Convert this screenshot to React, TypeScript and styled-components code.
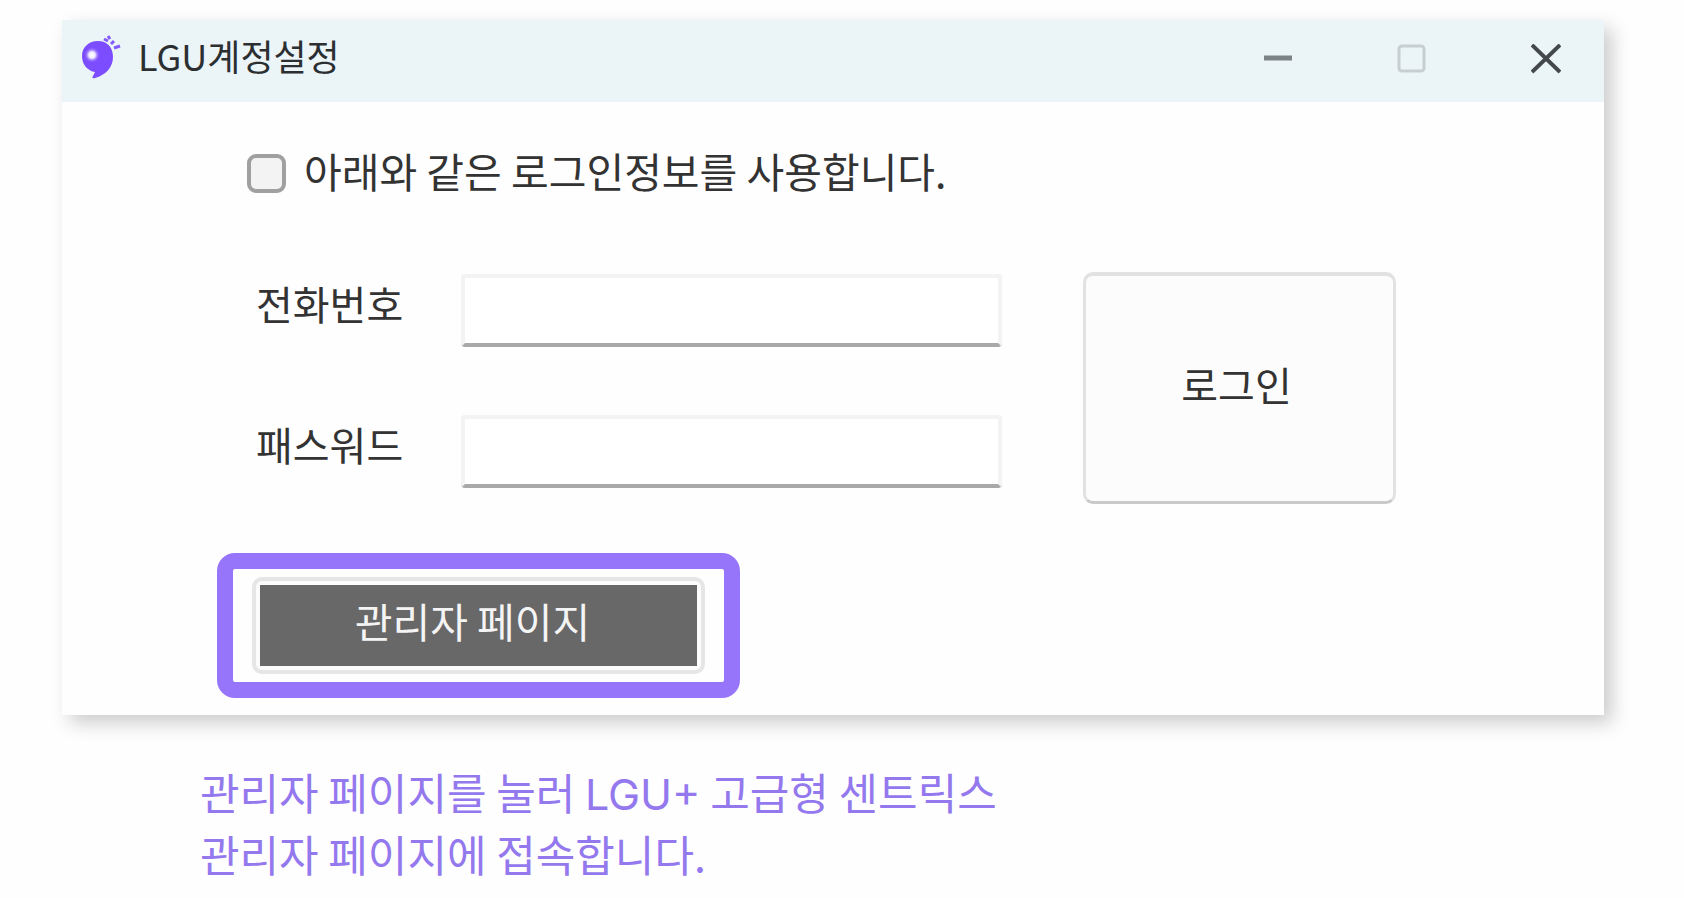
import React from "react";
import styled, { createGlobalStyle } from "styled-components";

const GlobalStyle = createGlobalStyle`
  *, *::before, *::after { box-sizing: border-box; }
  body {
    margin: 0;
    background: #fefefe;
    font-family: "Noto Sans CJK KR", sans-serif;
  }
  button, input { font-family: inherit; }
`;

const Page = styled.main`
  padding: 20px 80px 0 62px;
`;

const Window = styled.section`
  background: #fefefe;
  box-shadow: 8px 8px 18px rgba(0, 0, 0, 0.2);
`;

const TitleBar = styled.header`
  display: flex;
  align-items: center;
  height: 82px;
  padding: 0 28px 4px 18px;
  background: #ebf4f7;
`;

const Logo = styled.svg`
  flex: none;
  width: 44px;
  height: 48px;
`;

const Title = styled.h1`
  flex: 1;
  margin: 0;
  padding: 0 0 8px 14px;
  font-size: 36px;
  line-height: 48px;
  font-weight: 400;
  color: #2b2f32;
`;

const Controls = styled.div`
  display: flex;
  gap: 74px;
`;

const ControlButton = styled.button`
  display: flex;
  align-items: center;
  justify-content: center;
  width: 60px;
  height: 60px;
  padding: 0;
  border: 0;
  background: none;
`;

const Form = styled.form`
  padding: 46px 208px 17px 155px;
`;

const CheckLabel = styled.label`
  display: flex;
  align-items: center;
  gap: 18px;
  height: 48px;
  margin-left: 30px;
  font-size: 41px;
  line-height: 48px;
  color: #333;
`;

const CheckBox = styled.input`
  appearance: none;
  flex: none;
  width: 39px;
  height: 39px;
  margin: 2px 0 0;
  border: 4px solid #a0a0a0;
  border-radius: 9px;
  background: #f3f3f3;
`;

const CheckText = styled.span`
  padding-bottom: 4px;
`;

const LoginArea = styled.div`
  display: flex;
  gap: 81px;
  margin: 76px 0 49px 38px;
`;

const Fields = styled.div`
  display: grid;
  flex: 1;
  align-content: start;
  grid-template-columns: 206px 1fr;
  row-gap: 68px;
  padding-top: 2px;
`;

const FieldLabel = styled.label`
  padding: 5px 0 0 1px;
  font-size: 40px;
  line-height: 48px;
  color: #333;
`;

const Field = styled.input`
  width: 100%;
  min-width: 0;
  height: 73px;
  padding: 0 16px;
  border: 4px solid #f3f3f3;
  border-bottom: 4px solid #a9a9a9;
  border-radius: 4px;
  background: #fff;
  font-size: 40px;
  color: #333;
`;

const LoginButton = styled.button`
  flex: none;
  width: 313px;
  height: 232px;
  padding: 0 6px 10px 0;
  border: 3px solid #e2e2e2;
  border-top-width: 4px;
  border-bottom-color: #c9c9c9;
  border-radius: 10px;
  background: #fcfcfc;
  font-size: 40px;
  color: #333;
`;

const Highlight = styled.div`
  width: 523px;
  max-width: 100%;
  padding: 8px 19px;
  border: 16px solid #9775fa;
  border-radius: 18px;
`;

const AdminButton = styled.button`
  display: block;
  width: 100%;
  height: 97px;
  padding: 4px;
  border: 4px solid #e6e6e6;
  border-radius: 10px;
  background: #fcfcfc;
`;

const AdminText = styled.span`
  display: flex;
  align-items: center;
  justify-content: center;
  height: 100%;
  padding: 0 12px 12px 0;
  background: #686868;
  font-size: 41px;
  line-height: 48px;
  color: #f4f4f4;
`;

const Caption = styled.p`
  margin: 0;
  padding: 45px 0 0 138px;
  font-size: 43px;
  line-height: 62px;
  color: #9478ee;
`;

const Brand = styled.span`
  font-family: Inter, sans-serif;
  line-height: 1;
`;

export default function App() {
  return (
    <>
      <GlobalStyle />
      <Page>
        <Window>
          <TitleBar>
            <Logo viewBox="0 0 44 48" aria-hidden="true">
              <defs>
                <radialGradient id="shine">
                  <stop offset="0" stopColor="#fff" />
                  <stop offset="0.4" stopColor="#f0eaff" />
                  <stop offset="1" stopColor="#7c4dff" stopOpacity="0" />
                </radialGradient>
              </defs>
              <path
                d="M18 6C27 6 33 12 33 22C33 32 26 40 15 43C12 44 12 42 13 41L15 37C8 36 2 30 2 21C2 12 9 6 18 6Z"
                fill="#7c4dff"
              />
              <circle cx="12" cy="20" r="8" fill="url(#shine)" />
              <g stroke="#8459ff" strokeWidth="3">
                <path d="M24 4L28 6M28 1L30 4M31 9L34 6M34 13L40 11" />
              </g>
            </Logo>
            <Title>LGU계정설정</Title>
            <Controls>
              <ControlButton type="button" aria-label="최소화">
                <svg width="30" height="30" viewBox="0 0 30 30">
                  <path d="M1 14H29" stroke="#7c8386" strokeWidth="5" />
                </svg>
              </ControlButton>
              <ControlButton type="button" aria-label="최대화" disabled>
                <svg width="30" height="30" viewBox="0 0 30 30">
                  <rect x="2" y="2" width="25" height="25" rx="3" fill="none" stroke="#c6ced1" strokeWidth="3" />
                </svg>
              </ControlButton>
              <ControlButton type="button" aria-label="닫기">
                <svg width="30" height="30" viewBox="0 0 30 30">
                  <path d="M1 1L29 28M29 1L1 28" stroke="#43484b" strokeWidth="4" />
                </svg>
              </ControlButton>
            </Controls>
          </TitleBar>
          <Form onSubmit={(e) => e.preventDefault()}>
            <CheckLabel>
              <CheckBox type="checkbox" />
              <CheckText>아래와 같은 로그인정보를 사용합니다.</CheckText>
            </CheckLabel>
            <LoginArea>
              <Fields>
                <FieldLabel htmlFor="phone">전화번호</FieldLabel>
                <Field id="phone" type="text" />
                <FieldLabel htmlFor="password">패스워드</FieldLabel>
                <Field id="password" type="password" />
              </Fields>
              <LoginButton type="submit">로그인</LoginButton>
            </LoginArea>
            <Highlight>
              <AdminButton type="button">
                <AdminText>관리자 페이지</AdminText>
              </AdminButton>
            </Highlight>
          </Form>
        </Window>
        <Caption>
          관리자 페이지를 눌러 <Brand>LGU+</Brand> 고급형 센트릭스
          <br />
          관리자 페이지에 접속합니다.
        </Caption>
      </Page>
    </>
  );
}
